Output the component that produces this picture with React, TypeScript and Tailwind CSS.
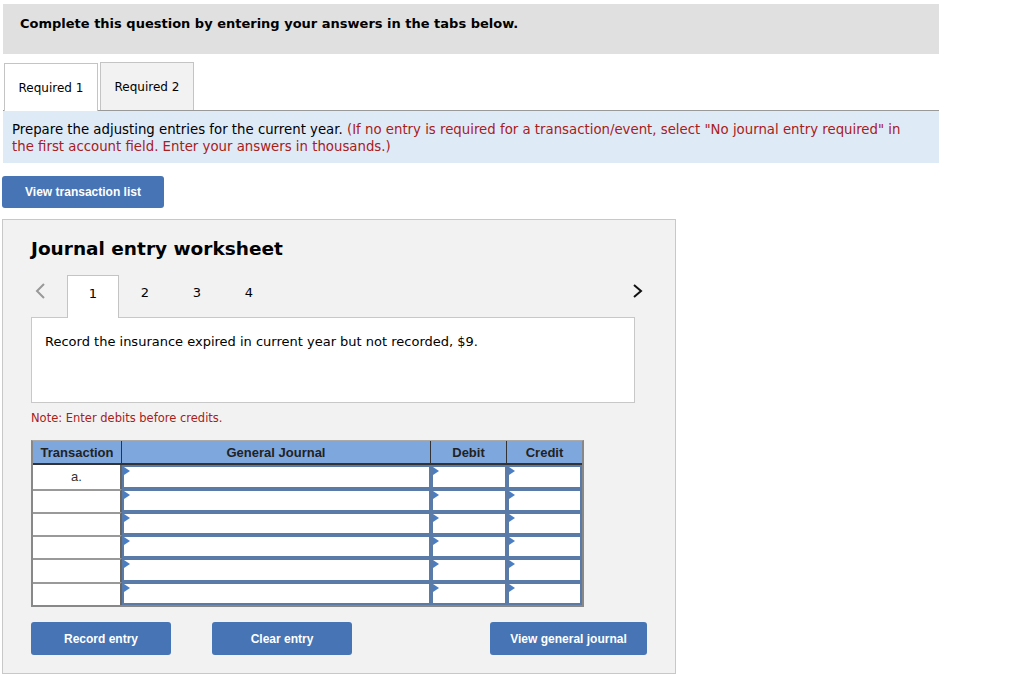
const verdana = { fontFamily: '"DejaVu Sans", Verdana, sans-serif' };
const arial = { fontFamily: '"Liberation Sans", Arial, sans-serif' };

function Triangle() {
  return (
    <svg className="absolute left-0 top-0" width="6" height="8" viewBox="0 0 6 8">
      <path d="M0 0 L6 4 L0 8 Z" fill="#4a7ec4" />
    </svg>
  );
}

function InputCell({ w }: { w: string }) {
  return (
    <div className={`relative ${w} h-full border-2 border-[#5a7aa8] bg-white`}>
      <Triangle />
    </div>
  );
}

export default function App() {
  const rows = ['a.', '', '', '', '', ''];

  return (
    <div className="w-[1024px] h-[677px] bg-white overflow-hidden text-black" style={verdana}>
      <div className="ml-[3px] mt-[4px] w-[936px] h-[50px] bg-[#e0e0e0] pl-[17px] pt-[7px]">
        <span className="text-[13px] font-bold">Complete this question by entering your answers in the tabs below.</span>
      </div>

      <div className="ml-[3px] mt-[8px] w-[936px] flex items-end border-b border-[#999]">
        <div className="ml-[1px] w-[94px] h-[48px] bg-white border border-b-0 border-[#c4c4c4] flex items-center justify-center text-[12px] -mb-px">
          Required 1
        </div>
        <div className="ml-[2px] w-[94px] h-[48px] bg-[#f2f2f2] border border-b-0 border-[#c4c4c4] flex items-center justify-center text-[12px]">
          Required 2
        </div>
      </div>

      <div className="ml-[3px] w-[936px] h-[52px] bg-[#dfeaf7] pl-[9px] pt-[10px] text-[13.3px] leading-[17px]">
        <div>
          <span>Prepare the adjusting entries for the current year. </span>
          <span className="text-[#a8201a]">
            (If no entry is required for a transaction/event, select "No journal entry required" in
          </span>
        </div>
        <div className="text-[#a8201a]">the first account field. Enter your answers in thousands.)</div>
      </div>

      <button
        className="ml-[2px] mt-[13px] w-[162px] h-[32px] rounded-[3px] bg-[#4674b4] text-white text-[12px] font-bold flex items-center justify-center"
        style={arial}
      >
        View transaction list
      </button>

      <div className="ml-[2px] mt-[11px] w-[674px] h-[455px] bg-[#f2f2f2] border border-[#c8c8c8] pl-[28px]">
        <h2 className="mt-[17px] text-[18.5px] font-bold leading-[24px]">Journal entry worksheet</h2>

        <div className="mt-[14px] flex items-end w-[613px]">
          <div className="w-[36px] h-[42px] pl-[3px] pt-[7px]">
            <svg width="12" height="18" viewBox="0 0 12 18">
              <path d="M10 2 L3 9 L10 16" stroke="#999" strokeWidth="2" fill="none" />
            </svg>
          </div>
          <div className="w-[52px] h-[43px] bg-white border border-b-0 border-[#c4c4c4] flex justify-center pt-[8px] text-[13px] -mb-px relative z-10">
            1
          </div>
          <div className="w-[52px] h-[42px] flex justify-center pt-[8px] text-[13px]">2</div>
          <div className="w-[52px] h-[42px] flex justify-center pt-[8px] text-[13px]">3</div>
          <div className="w-[52px] h-[42px] flex justify-center pt-[8px] text-[13px]">4</div>
          <div className="flex-1 h-[42px] flex justify-end pt-[7px]">
            <svg width="12" height="18" viewBox="0 0 12 18">
              <path d="M2 3 L9 9 L2 15" stroke="#111" strokeWidth="2" fill="none" />
            </svg>
          </div>
        </div>

        <div className="w-[604px] h-[86px] bg-white border border-[#c8c8c8] pl-[13px] pt-[14px] text-[13px]">
          Record the insurance expired in current year but not recorded, $9.
        </div>

        <p className="mt-[7px] text-[11.5px] text-[#a8201a]">Note: Enter debits before credits.</p>

        <div className="mt-[13px] w-[553px] border-2 border-t border-[#888] border-t-[#aaa]" style={arial}>
          <div className="flex h-[24px] bg-[#7ea7de] text-[13px] font-bold text-[#222] border-b-2 border-[#333]">
            <div className="w-[89px] flex items-center justify-center border-r border-[#333]">Transaction</div>
            <div className="w-[309px] flex items-center justify-center border-r border-[#333]">General Journal</div>
            <div className="w-[76px] flex items-center justify-center border-r border-[#333]">Debit</div>
            <div className="flex-1 flex items-center justify-center">Credit</div>
          </div>
          {rows.map((r, i) => (
            <div key={i} className="flex h-[23.3px]">
              <div
                className={`w-[89px] bg-white flex items-start justify-center pt-[2px] text-[13px] text-[#333] border-r-2 border-[#666] ${
                  i > 0 ? 'border-t-2 border-t-[#999]' : ''
                }`}
              >
                {r}
              </div>
              <InputCell w="w-[309px]" />
              <InputCell w="w-[76px]" />
              <InputCell w="flex-1" />
            </div>
          ))}
        </div>

        <div className="mt-[15px] w-[616px] flex" style={arial}>
          <button className="w-[140px] h-[33px] rounded-[3px] bg-[#4674b4] text-white text-[12px] font-bold">
            Record entry
          </button>
          <button className="ml-[41px] w-[140px] h-[33px] rounded-[3px] bg-[#4674b4] text-white text-[12px] font-bold">
            Clear entry
          </button>
          <button className="ml-auto w-[157px] h-[33px] rounded-[3px] bg-[#4674b4] text-white text-[12px] font-bold">
            View general journal
          </button>
        </div>
      </div>
    </div>
  );
}
